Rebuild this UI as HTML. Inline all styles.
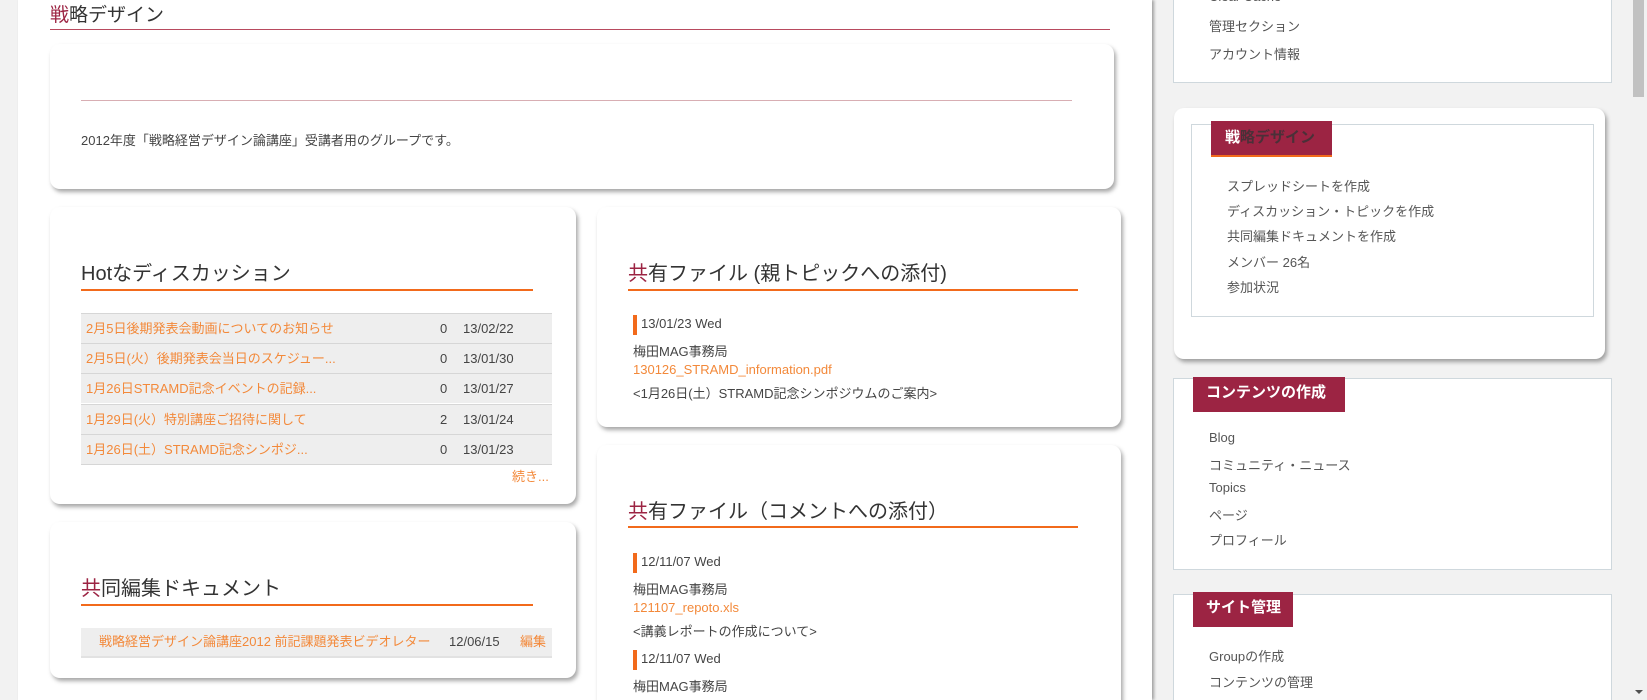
<!DOCTYPE html>
<html style="width:1647px;height:700px;overflow:hidden"><head><meta charset="utf-8"><style>
*{margin:0;padding:0;box-sizing:border-box}
body{width:1647px;height:700px;overflow:hidden;background:#f2f2f2;font-family:"Liberation Sans","Noto Sans CJK JP",sans-serif;font-size:13px;color:#444;position:relative}
.a{position:absolute;white-space:nowrap}
.main{position:absolute;left:18px;top:0;width:1134px;height:700px;background:#fff;box-shadow:2px 0 3px rgba(0,0,0,.35)}
.card{position:absolute;background:#fff;border-radius:10px;box-shadow:2px 3px 4px rgba(0,0,0,.35)}
.h{position:absolute;font-size:20px;color:#333;white-space:nowrap;line-height:24px}
.h b{font-weight:normal;color:#9c2443}
.ul{position:absolute;height:2px;background:#f26a1b}
.lk{color:#f3893a}
.row{position:absolute;left:81px;width:471px;height:30px;background:#eee;border-top:1px solid #d6d6d6;line-height:29px}
.box{position:absolute;background:#fff;border:1px solid #cfd8dd}
.tab{position:absolute;background:#9c2443;color:#fff;font-weight:bold;font-size:15px;line-height:32px;padding-left:13px}
.it{position:absolute;white-space:nowrap;font-size:13px;color:#555}
.bar{position:absolute;width:4px;height:20px;background:#f26a1b}
</style></head><body>
<div class="main"></div>
<div class="h" style="left:50px;top:4px;font-size:19px"><b>戦</b>略デザイン</div>
<div class="a" style="left:50px;top:29px;width:1060px;height:1px;background:#b84a5e"></div>

<div class="card" style="left:50px;top:44px;width:1064px;height:145px"></div>
<div class="a" style="left:81px;top:100px;width:991px;height:1px;background:#d8aeb3"></div>
<div class="a" style="left:81px;top:130px">2012年度「戦略経営デザイン論講座」受講者用のグループです。</div>

<div class="card" style="left:50px;top:207px;width:526px;height:297px"></div>
<div class="h" style="left:81px;top:262px">Hotなディスカッション</div>
<div class="ul" style="left:81px;top:289px;width:452px"></div>
<div class="row" style="top:313px"><span class="a lk" style="left:5px">2月5日後期発表会動画についてのお知らせ</span><span class="a" style="left:359px">0</span><span class="a" style="left:382px">13/02/22</span></div>
<div class="row" style="top:343px"><span class="a lk" style="left:5px">2月5日(火）後期発表会当日のスケジュー...</span><span class="a" style="left:359px">0</span><span class="a" style="left:382px">13/01/30</span></div>
<div class="row" style="top:373px"><span class="a lk" style="left:5px">1月26日STRAMD記念イベントの記録...</span><span class="a" style="left:359px">0</span><span class="a" style="left:382px">13/01/27</span></div>
<div class="row" style="top:404px"><span class="a lk" style="left:5px">1月29日(火）特別講座ご招待に関して</span><span class="a" style="left:359px">2</span><span class="a" style="left:382px">13/01/24</span></div>
<div class="row" style="top:434px;border-bottom:1px solid #d6d6d6;height:31px"><span class="a lk" style="left:5px">1月26日(土）STRAMD記念シンポジ...</span><span class="a" style="left:359px">0</span><span class="a" style="left:382px">13/01/23</span></div>
<div class="a lk" style="left:512px;top:466px">続き...</div>

<div class="card" style="left:50px;top:522px;width:526px;height:156px"></div>
<div class="h" style="left:81px;top:577px"><b>共</b>同編集ドキュメント</div>
<div class="ul" style="left:81px;top:604px;width:452px"></div>
<div class="a" style="left:81px;top:628px;width:471px;height:30px;background:#eee;border-bottom:2px solid #e2e2e2;line-height:28px"><span class="a lk" style="left:18px">戦略経営デザイン論講座2012 前記課題発表ビデオレター</span><span class="a" style="left:368px">12/06/15</span><span class="a lk" style="left:439px">編集</span></div>

<div class="card" style="left:597px;top:207px;width:524px;height:220px"></div>
<div class="h" style="left:628px;top:262px"><b>共</b>有ファイル (親トピックへの添付)</div>
<div class="ul" style="left:628px;top:289px;width:450px"></div>
<div class="bar" style="left:633px;top:315px"></div>
<div class="a" style="left:641px;top:316px">13/01/23 Wed</div>
<div class="a" style="left:633px;top:341px">梅田MAG事務局</div>
<div class="a lk" style="left:633px;top:362px">130126_STRAMD_information.pdf</div>
<div class="a" style="left:633px;top:383px">&lt;1月26日(土）STRAMD記念シンポジウムのご案内&gt;</div>

<div class="card" style="left:597px;top:445px;width:524px;height:270px"></div>
<div class="h" style="left:628px;top:500px"><b>共</b>有ファイル（コメントへの添付）</div>
<div class="ul" style="left:628px;top:526px;width:450px"></div>
<div class="bar" style="left:633px;top:553px"></div>
<div class="a" style="left:641px;top:554px">12/11/07 Wed</div>
<div class="a" style="left:633px;top:579px">梅田MAG事務局</div>
<div class="a lk" style="left:633px;top:600px">121107_repoto.xls</div>
<div class="a" style="left:633px;top:621px">&lt;講義レポートの作成について&gt;</div>
<div class="bar" style="left:633px;top:650px"></div>
<div class="a" style="left:641px;top:651px">12/11/07 Wed</div>
<div class="a" style="left:633px;top:676px">梅田MAG事務局</div>

<!-- sidebar -->
<div class="box" style="left:1173px;top:-10px;width:439px;height:93px"></div>
<div class="it" style="left:1209px;top:-11px">Clear Cache</div>
<div class="it" style="left:1209px;top:16px">管理セクション</div>
<div class="it" style="left:1209px;top:44px">アカウント情報</div>

<div class="card" style="left:1174px;top:108px;width:431px;height:251px"></div>
<div class="box" style="left:1191px;top:124px;width:403px;height:193px"></div>
<div class="tab" style="left:1211px;top:121px;width:121px;height:36px;border-bottom:2px solid #f26a1b;line-height:34px;padding-left:14px">戦<span style="color:#4a3038">略デザイン</span></div>
<div class="it" style="left:1227px;top:176px">スプレッドシートを作成</div>
<div class="it" style="left:1227px;top:201px">ディスカッション・トピックを作成</div>
<div class="it" style="left:1227px;top:226px">共同編集ドキュメントを作成</div>
<div class="it" style="left:1227px;top:252px">メンバー 26名</div>
<div class="it" style="left:1227px;top:277px">参加状況</div>

<div class="box" style="left:1173px;top:378px;width:439px;height:192px"></div>
<div class="tab" style="left:1193px;top:377px;width:152px;height:35px">コンテンツの作成</div>
<div class="it" style="left:1209px;top:430px">Blog</div>
<div class="it" style="left:1209px;top:455px">コミュニティ・ニュース</div>
<div class="it" style="left:1209px;top:480px">Topics</div>
<div class="it" style="left:1209px;top:505px">ページ</div>
<div class="it" style="left:1209px;top:530px">プロフィール</div>

<div class="box" style="left:1173px;top:594px;width:439px;height:120px"></div>
<div class="tab" style="left:1193px;top:592px;width:100px;height:35px">サイト管理</div>
<div class="it" style="left:1209px;top:646px">Groupの作成</div>
<div class="it" style="left:1209px;top:672px">コンテンツの管理</div>
<div class="it" style="left:1209px;top:697px">メンバーの管理</div>

<div class="a" style="left:1630px;top:0;width:17px;height:700px;background:#f1f1f1"></div>
<div class="a" style="left:1633px;top:0;width:11px;height:97px;background:#c1c1c1"></div>
<div class="a" style="left:1635px;top:690px;width:0;height:0;border-left:4px solid transparent;border-right:4px solid transparent;border-top:4px solid #505050"></div>
</body></html>
